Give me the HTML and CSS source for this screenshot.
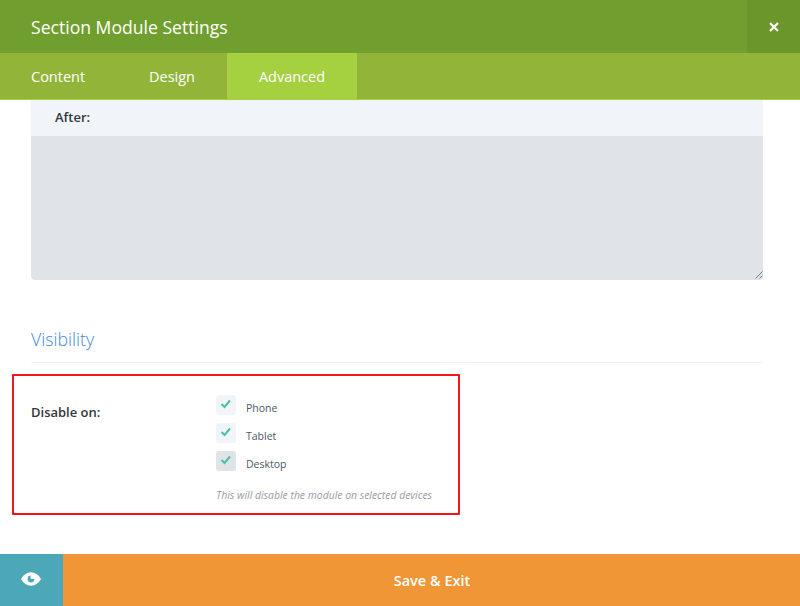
FILE: index.html
```html
<!DOCTYPE html>
<html lang="en">
<head>
<meta charset="utf-8">
<title>Section Module Settings</title>
<link rel="stylesheet" href="styles.css">
</head>
<body>
<div class="modal">
  <header class="header">
    <h1 class="title">Section Module Settings</h1>
    <button class="close" aria-label="Close">
      <svg width="10" height="10" viewBox="0 0 10 10"><path d="M1 1L9 9M9 1L1 9" stroke="#fff" stroke-width="2.2" fill="none"/></svg>
    </button>
  </header>
  <nav class="tabs">
    <div class="tab tab-content">Content</div>
    <div class="tab tab-design">Design</div>
    <div class="tab tab-advanced">Advanced</div>
  </nav>
  <main class="body">
    <div class="field-label">After:</div>
    <div class="textarea">
      <svg class="grip" width="8" height="8" viewBox="0 0 8 8"><path d="M0.5 7.5L7.5 0.5M4.5 7.5L7.5 4.5" stroke="#777b82" stroke-width="1" fill="none"/></svg>
    </div>
    <h2 class="section-title">Visibility</h2>
    <div class="rule"></div>
    <section class="highlight">
      <div class="option-label">Disable on:</div>
      <div class="option-values">
        <label class="check-row"><span class="box"><svg width="12" height="10" viewBox="0 0 12 10"><path d="M1.5 5L4.5 8L10 1.5" stroke="#4bbfa8" stroke-width="2" fill="none"/></svg></span><span class="check-text">Phone</span></label>
        <label class="check-row"><span class="box"><svg width="12" height="10" viewBox="0 0 12 10"><path d="M1.5 5L4.5 8L10 1.5" stroke="#4bbfa8" stroke-width="2" fill="none"/></svg></span><span class="check-text">Tablet</span></label>
        <label class="check-row"><span class="box box-dark"><svg width="12" height="10" viewBox="0 0 12 10"><path d="M1.5 5L4.5 8L10 1.5" stroke="#4bbfa8" stroke-width="2" fill="none"/></svg></span><span class="check-text">Desktop</span></label>
        <p class="hint">This will disable the module on selected devices</p>
      </div>
    </section>
  </main>
  <footer class="footer">
    <button class="preview" aria-label="Preview">
      <svg width="20" height="14" viewBox="0 0 20 14"><path fill="#fff" fill-rule="evenodd" d="M0 7C2.5 2.5 6 0.3 10 0.3S17.5 2.5 20 7C17.5 11.5 14 13.7 10 13.7S2.5 11.5 0 7ZM10 3.6A3.4 3.4 0 1 0 13.4 7H10.8A1.4 1.4 0 0 1 9.4 5.6C9.4 4.8 9.6 4.1 10 3.6Z"/></svg>
    </button>
    <button class="save">Save &amp; Exit</button>
  </footer>
</div>
</body>
</html>
```

FILE: styles.css
```css
* { box-sizing: border-box; }
html, body { margin: 0; height: 100%; }
body { font-family: "Open Sans", sans-serif; background: #fff; overflow: hidden; }
.modal { display: flex; flex-direction: column; width: 800px; height: 606px; }

.header { flex: 0 0 53px; display: flex; justify-content: space-between; align-items: stretch; background: #719f2f; }
.title { margin: 0; padding: 1px 0 0 31px; font-size: 17.6px; font-weight: 400; line-height: 52px; color: #fff; }
.close { width: 53px; border: 0; padding: 0 0 0 1px; background: #6b962b; display: flex; align-items: center; justify-content: center; }

.tabs { flex: 0 0 47px; display: flex; background: #92b539; border-bottom: 1px solid #a5d040; }
.tab { padding-top: 1px; font-size: 14.5px; line-height: 45px; color: #fff; text-align: center; }
.tab-content { padding-left: 31px; width: 118px; text-align: left; }
.tab-design { width: 109px; text-align: left; padding-left: 31px; }
.tab-advanced { width: 130px; background: #a5d040; }

.body { flex: 1 1 auto; display: flex; flex-direction: column; min-height: 0; padding: 0 37px 0 31px; }
.field-label { height: 36px; padding: 6px 24px 0; background: #f1f5f9; font-size: 13px; font-weight: 600; line-height: 22px; color: #32373c; }
.textarea { position: relative; height: 144px; background: #e0e3e8; border-radius: 0 0 4px 4px; }
.grip { position: absolute; right: 0; bottom: 1px; }
.section-title { margin: 46px 0 0; font-size: 17.7px; font-weight: 300; line-height: 26px; color: #3f87d8; }
.rule { height: 1px; margin-top: 10px; background: #eef2f7; }

.highlight { display: flex; width: 448px; height: 141px; margin: 11px 0 0 -19px; padding: 19px 0 0 17px; border: 2px solid #f5141a; border-radius: 1px; }
.option-label { width: 185px; padding-top: 6px; font-size: 13px; font-weight: 600; line-height: 22px; color: #32373c; }
.option-values { display: flex; flex-direction: column; }
.check-row { display: flex; height: 28px; }
.box { width: 20px; height: 20px; border-radius: 3px; background: #f1f5f9; display: flex; align-items: center; justify-content: center; padding-bottom: 2px; }
.box-dark { background: #e0e3e8; }
.check-text { margin: 3px 0 0 10px; font-size: 10.5px; line-height: 20px; color: #4c5866; }
.hint { margin: 7px 0 0; font-size: 10.4px; font-style: italic; line-height: 18px; color: #969ba6; white-space: nowrap; }

.footer { flex: 0 0 52px; display: flex; }
.preview { width: 63px; border: 0; padding: 0 1px 3px 0; background: #4ca7b8; display: flex; align-items: center; justify-content: center; }
.save { flex: 1; border: 0; padding: 0 0 0 1px; background: #f09637; color: #fff; font-family: inherit; font-size: 14.5px; font-weight: 600; }
```
